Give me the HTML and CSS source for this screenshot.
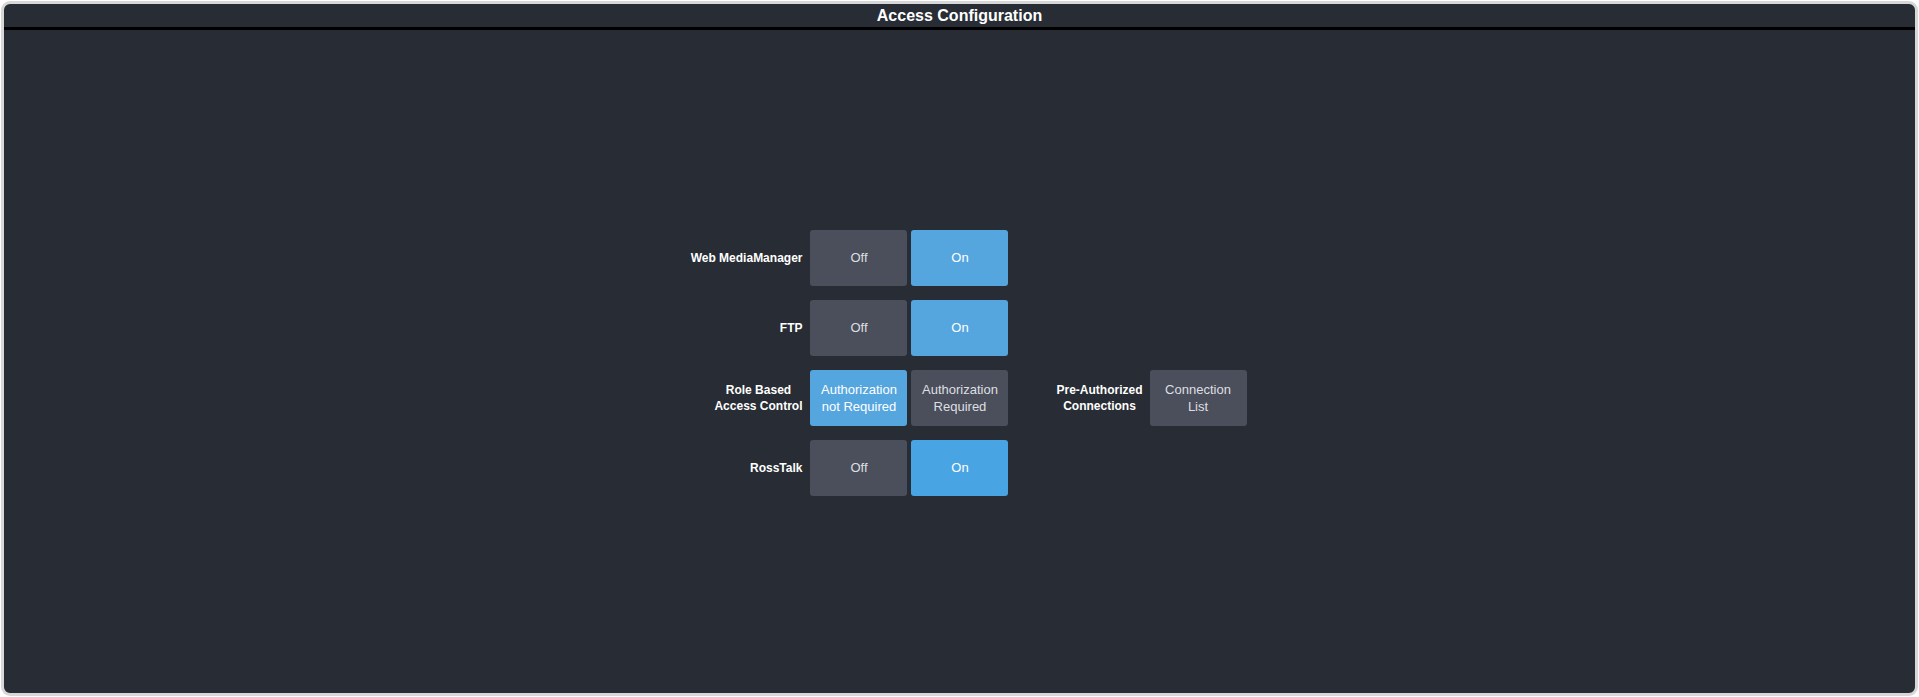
FILE: index.html
```html
<!DOCTYPE html>
<html lang="en">

<head>
  <meta charset="UTF-8" />
  <title>Access Configuration</title>
  <link rel="stylesheet" href="styles.css">
</head>

<body>

  <div class="painel">
    <div class="titulo">Access Configuration</div>

    <div class="conteudo">
      <div class="grade">
        <div class="rotulo">Web MediaManager</div>
        <button class="botao">Off</button>
        <button class="botao azul">On</button>
        <div></div><div></div>

        <div class="rotulo">FTP</div>
        <button class="botao">Off</button>
        <button class="botao azul">On</button>
        <div></div><div></div>

        <div class="rotulo">Role Based<br>Access Control</div>
        <button class="botao azul">Authorization<br>not Required</button>
        <button class="botao">Authorization<br>Required</button>
        <div class="rotulo centro">Pre-Authorized<br>Connections</div>
        <button class="botao">Connection<br>List</button>

        <div class="rotulo">RossTalk</div>
        <button class="botao">Off</button>
        <button class="botao azul forte">On</button>
        <div></div><div></div>
      </div>
    </div>
  </div>

</body>

</html>
```

FILE: styles.css
```css
html,
body {
  height: 100%;
}

body {
  margin: 0;
  padding: 1px;
  box-sizing: border-box;
  background-color: #ffffff;
  font-family: "Liberation Sans", Arial, sans-serif;
}

.painel {
  height: 100%;
  box-sizing: border-box;
  border: 3px solid #d7d7d7;
  border-radius: 9px;
  background-color: #282c34;
  display: flex;
  flex-direction: column;
  overflow: hidden;
}

.titulo {
  height: 23px;
  line-height: 23px;
  border-bottom: 3px solid #000000;
  text-align: center;
  color: #ffffff;
  font-size: 16px;
  font-weight: bold;
}

.conteudo {
  flex: 1;
  display: flex;
  justify-content: center;
  align-items: center;
}

.grade {
  display: grid;
  grid-template-columns: 130px 97px 97px auto 97px;
  grid-auto-rows: 56px;
  column-gap: 4px;
  row-gap: 14px;
  margin-top: 2px;
  margin-left: 4px;
}

.rotulo {
  justify-self: end;
  align-self: center;
  margin-right: 4px;
  color: #ffffff;
  font-size: 12px;
  font-weight: bold;
  line-height: 16px;
  text-align: center;
}

.rotulo.centro {
  margin-left: 44px;
  margin-right: 3px;
}

.botao {
  margin: 0;
  padding: 0;
  border: none;
  border-radius: 3px;
  background-color: #4a4f5b;
  color: #dedfe2;
  font-family: "Liberation Sans", Arial, sans-serif;
  font-size: 13px;
  line-height: 17px;
  cursor: pointer;
}

.azul {
  background-color: #55a6df;
  color: #ffffff;
}

.forte {
  background-color: #49a4e3;
}
```
